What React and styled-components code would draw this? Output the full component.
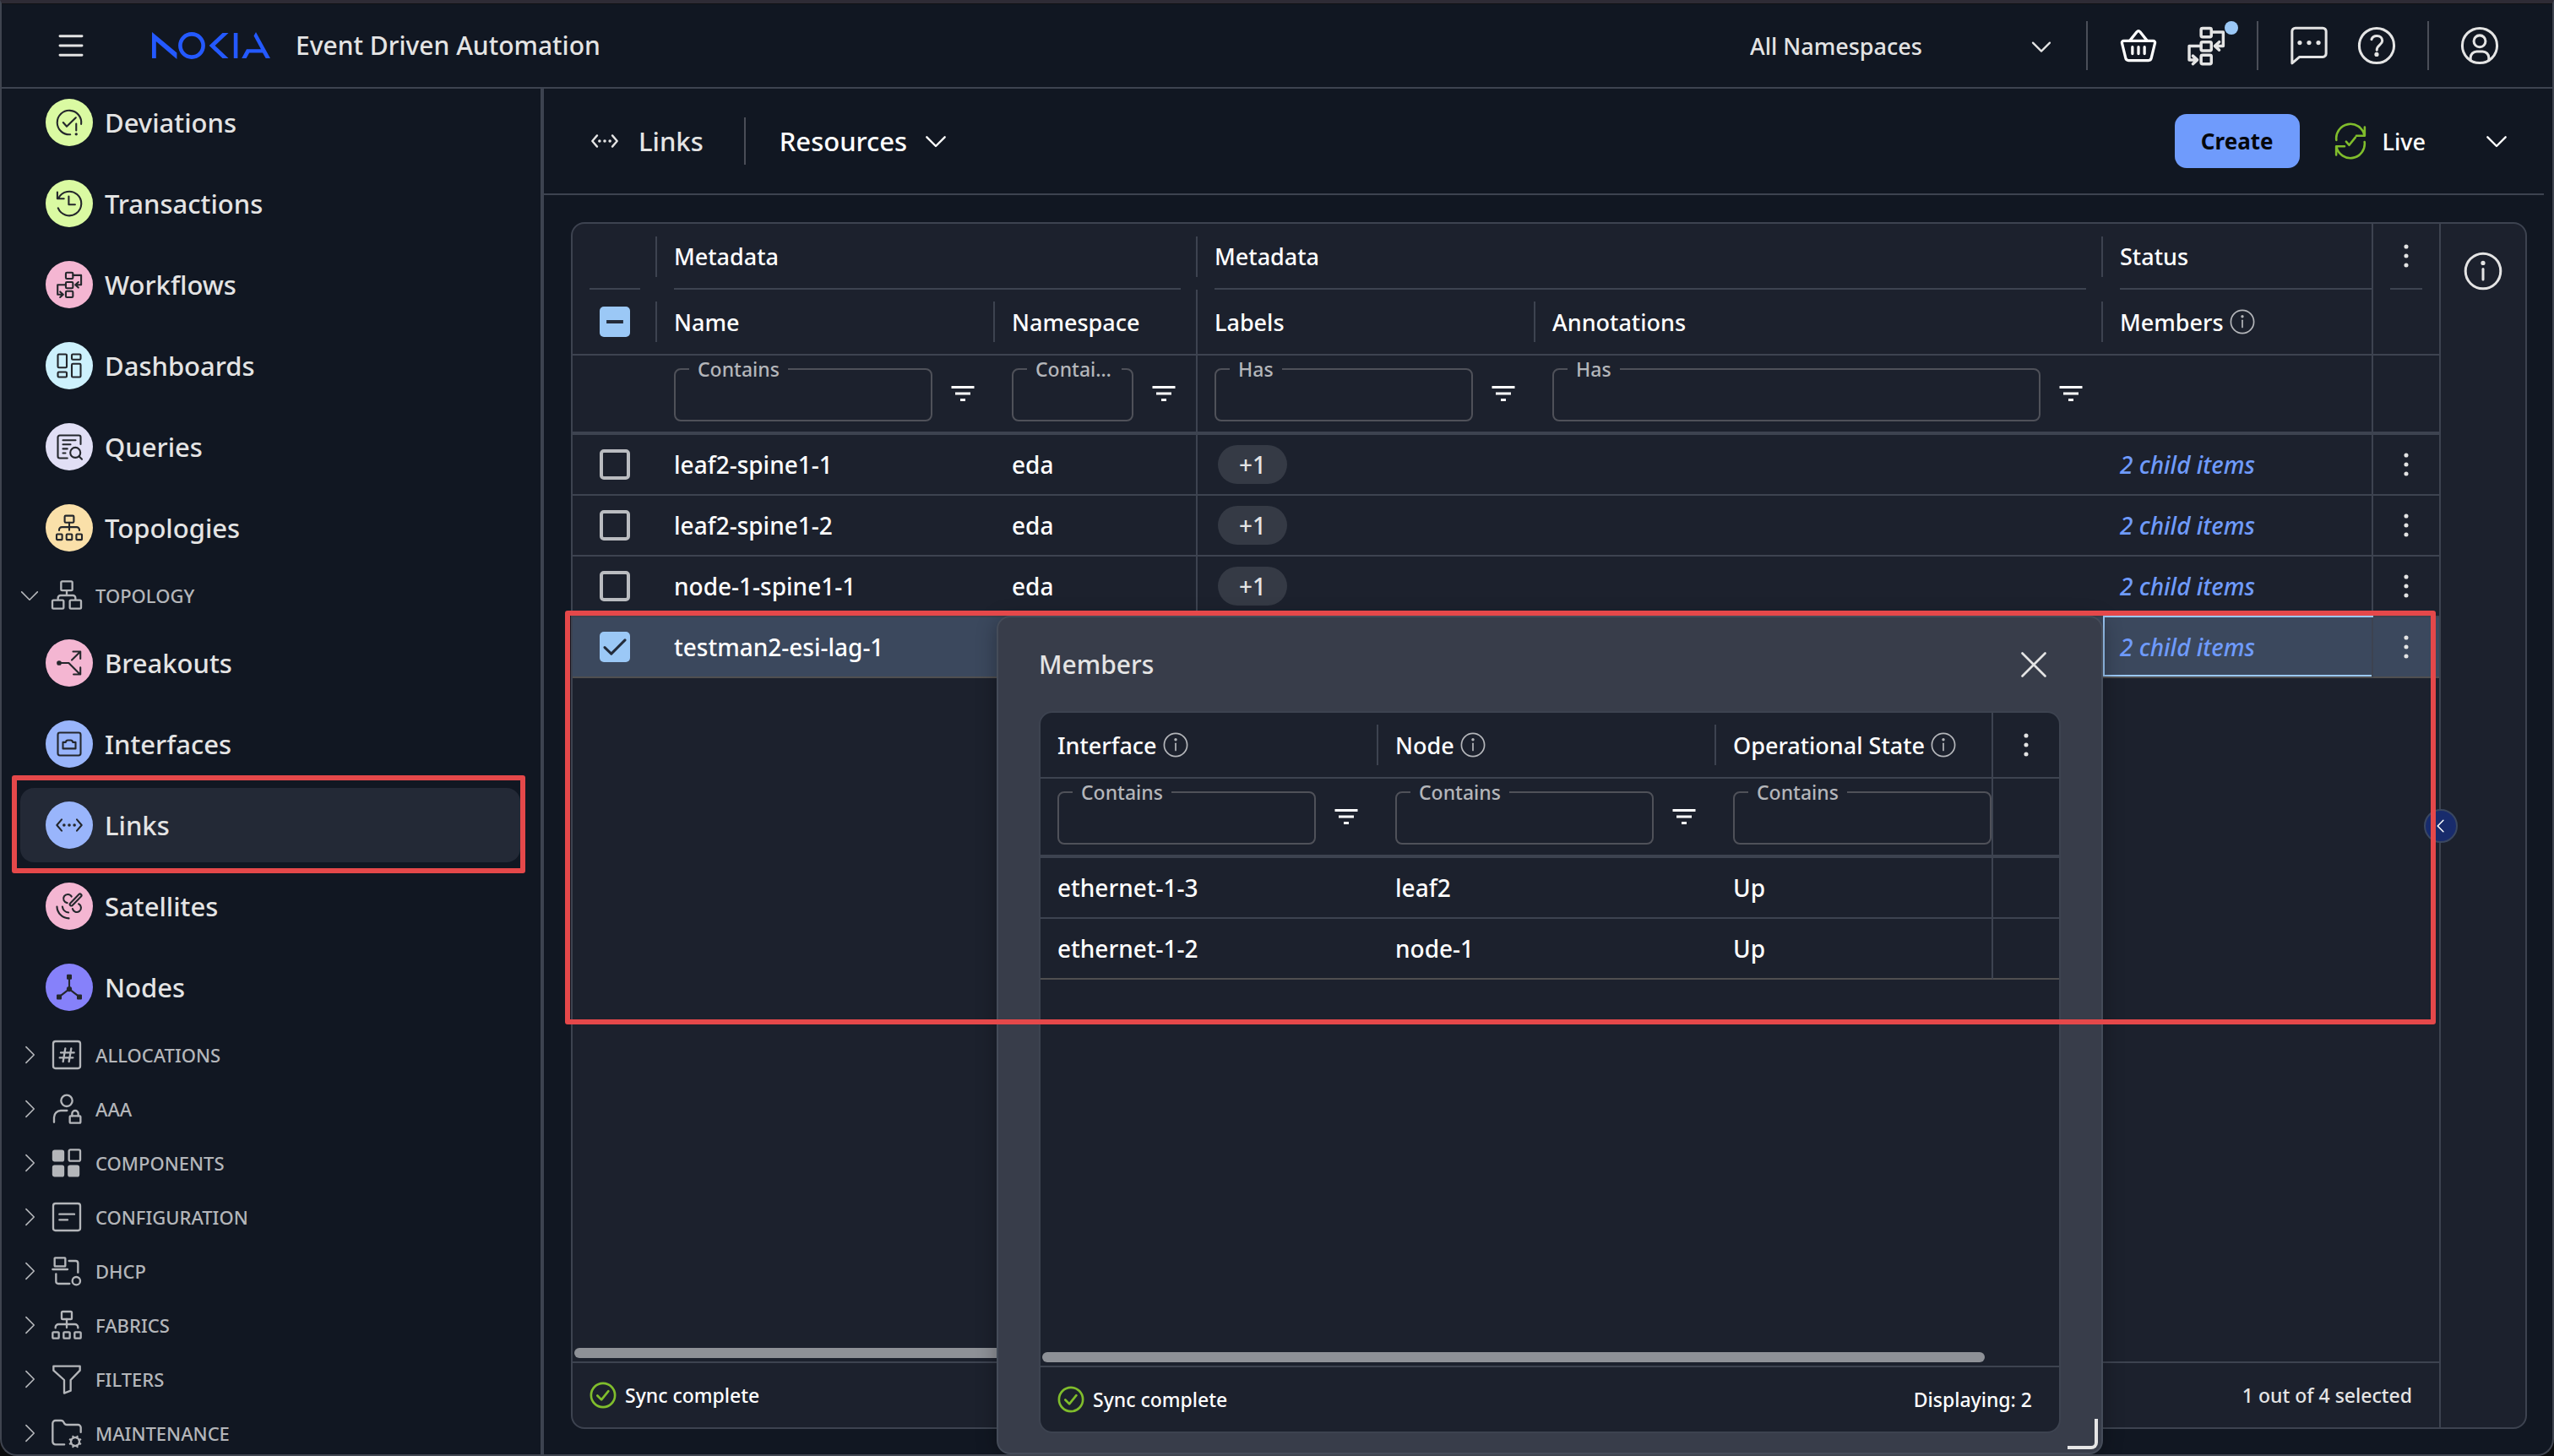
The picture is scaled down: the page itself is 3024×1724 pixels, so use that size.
import { useEffect, useId, useRef, useState } from "react";
import styled, { createGlobalStyle, ThemeProvider } from "styled-components";
import { FolderCog } from "lucide-react";
import { MdFilterList } from "react-icons/md";

const theme = {
  bg: "#111722",
  panel: "#1c212d",
  line: "#3d4350",
  dialog: "#383d4a",
  text: "#e4e4e4",
  muted: "#b4b6ba",
  blue: "#6f9bfc",
  sky: "#9bc8f6",
  green: "#80bd2c",
  red: "#e5484a",
};

const GlobalStyle = createGlobalStyle`
  * {
    box-sizing: border-box;
  }

  body {
    margin: 0;
    background: #0b0c0e;
    color: ${theme.text};
    font-family: "Noto Sans", "Open Sans", sans-serif;
    font-size: 28px;
  }

  button, input, select {
    font: inherit;
    color: inherit;
  }

  button {
    padding: 0;
    border: 0;
    background: none;
    cursor: pointer;
  }

  svg {
    display: block;
    flex: none;
  }
`;

/* ---------- layout ---------- */

const Window = styled.div`
  display: flex;
  flex-direction: column;
  height: 100vh;
  overflow: hidden;
  background: ${({ theme }) => theme.bg};
  border: 2px solid #3f444f;
  border-top: 4px solid #2e2b35;
  border-radius: 0 0 20px 20px;
`;

const Header = styled.header`
  display: flex;
  align-items: center;
  flex: none;
  height: 101px;
  padding: 0 26px 0 66px;
  border-top: 1px solid #101114;
  border-bottom: 2px solid ${({ theme }) => theme.line};
`;

const Body = styled.div`
  display: flex;
  flex: 1;
  min-height: 0;
`;

const Sidebar = styled.nav`
  flex: none;
  width: 642px;
  overflow: hidden;
  border-right: 4px solid ${({ theme }) => theme.line};
`;

const Main = styled.main`
  display: flex;
  flex-direction: column;
  flex: 1;
  min-width: 0;
`;

const Content = styled.section`
  position: relative;
  display: flex;
  flex: 1;
  min-height: 0;
  padding: 32px 30px 30px 32px;
`;

/* ---------- icons ---------- */

const Svg = styled.svg.attrs((p) => ({
  viewBox: p.viewBox || "0 0 24 24",
  "aria-hidden": true,
}))`
  width: ${({ $size }) => $size || 36}px;
  height: ${({ $size }) => $size || 36}px;
  fill: none;
  stroke: currentColor;
  stroke-width: ${({ $stroke }) => $stroke || 1.4};
  stroke-linecap: round;
  stroke-linejoin: round;

  .solid {
    fill: currentColor;
  }

  .dot {
    fill: currentColor;
    stroke: none;
  }
`;

const glyphs = {
  deviations: (
    <>
      <path d="M12.8 21.5A9.5 9.5 0 1 1 21.4 13.3" />
      <path d="M7.2 12l2.8 3.2 7.2-7M17.5 13v5.3" />
      <circle className="dot" cx="17.5" cy="21.2" r="1.1" />
    </>
  ),
  transactions: (
    <path d="M3.2 15.6A9.5 9.5 0 1 0 3.6 7.6M2.6 3v5.2h5.2M11.6 6.4v6.4h5" />
  ),
  workflows: (
    <>
      <rect x="9.3" y="2.5" width="5.6" height="4.8" rx=".8" />
      <rect x="9.3" y="10" width="5.6" height="4.8" rx=".8" />
      <rect x="9.3" y="17.2" width="5.6" height="4.8" rx=".8" />
      <path d="M15 4.6h6.4v7.6h-4.2M19.2 10l-2.4 2.2 2.4 2.2M9.2 12.2H2.8v7.6H7M4.8 17.6l2.4 2.2L4.8 22" />
    </>
  ),
  dashboards: (
    <>
      <rect x="3" y="3" width="7" height="10.5" rx=".8" />
      <rect x="14" y="3" width="7" height="4.2" rx=".8" />
      <rect x="3" y="17" width="7" height="4" rx=".8" />
      <rect x="14" y="10.5" width="7" height="10.5" rx=".8" />
    </>
  ),
  queries: (
    <>
      <path d="M10.5 21H4.5A1.5 1.5 0 0 1 3 19.5v-15A1.5 1.5 0 0 1 4.5 3h15A1.5 1.5 0 0 1 21 4.5V10" />
      <path d="M7 6.8h10M7 10.2h6M7 13.6h3.5M7 17h2" />
      <circle cx="16.8" cy="16.6" r="4" />
      <path d="M19.7 19.5l2.3 2.3" />
    </>
  ),
  fabric: (
    <>
      <rect x="8.4" y="2.4" width="7.2" height="5.4" rx=".8" />
      <path d="M12 7.8v6M4 14v-.4a2.2 2.2 0 0 1 2.2-2.2h11.6A2.2 2.2 0 0 1 20 13.6v.4" />
      <rect x="2" y="17" width="4.4" height="4.4" rx=".6" />
      <rect x="9.8" y="17" width="4.4" height="4.4" rx=".6" />
      <rect x="17.6" y="17" width="4.4" height="4.4" rx=".6" />
    </>
  ),
  topology: (
    <>
      <rect x="8" y="2" width="8" height="6.5" rx=".8" />
      <path d="M12 8.5v3.5M5.8 15v-1.2A1.8 1.8 0 0 1 7.6 12h8.8a1.8 1.8 0 0 1 1.8 1.8V15" />
      <rect x="1.8" y="15.4" width="8" height="6" rx=".8" />
      <rect x="14.2" y="15.4" width="8" height="6" rx=".8" />
    </>
  ),
  breakouts: (
    <>
      <circle className="solid" cx="4" cy="12" r="1.2" />
      <path d="M4 12h7.6l9 9M20.8 15.6V21h-5.4M14 9.6l6.6-6.4M15 3h5.8v5.6" />
    </>
  ),
  interfaces: (
    <>
      <rect x="3" y="3" width="18" height="18" rx="1.6" />
      <path d="M7 15.6v-5h2.2c.2-1 .8-1.6 1.6-1.6h2.4c.8 0 1.4.6 1.6 1.6H17v5z" />
    </>
  ),
  links: (
    <>
      <path d="M6 7.6L2.2 12 6 16.4M18 7.6l3.8 4.4-3.8 4.4" />
      <circle className="dot" cx="7.9" cy="12" r="1.2" />
      <circle className="dot" cx="12" cy="12" r="1.2" />
      <circle className="dot" cx="16.1" cy="12" r="1.2" />
    </>
  ),
  satellites: (
    <>
      <path d="M12.8 9.6l6.8-6.9a1.2 1.2 0 0 1 1.7 1.7l-6.8 6.9a1.2 1.2 0 0 1-1.7-1.7z" />
      <path d="M10.4 9.4A3.4 3.4 0 1 1 13.8 4.4M19.4 10.2a3.4 3.4 0 1 1-4.8 3.8" />
      <path d="M6.6 12.4a5.4 5.4 0 0 0 4.8 4.6M2.3 12.4a9.6 9.6 0 0 0 9.4 9.2" />
    </>
  ),
  nodes: (
    <>
      <rect className="solid" x="10.7" y="2.6" width="2.6" height="2.6" />
      <rect className="solid" x="2.7" y="18.4" width="2.6" height="2.6" />
      <rect className="solid" x="18.7" y="18.4" width="2.6" height="2.6" />
      <circle className="solid" cx="12" cy="13.4" r="1.4" />
      <path d="M12 4v9.4L4 19.6M12 13.4l8 6.2" />
    </>
  ),
  allocations: (
    <>
      <rect x="2.4" y="2.4" width="19.2" height="19.2" rx="1.6" />
      <path d="M11 7.4l-1.6 9.4M15.2 7.4l-1.6 9.4M7.8 10.4h9.4M7 14h9.4" />
    </>
  ),
  aaa: (
    <>
      <circle cx="12" cy="6.2" r="4" />
      <path d="M3 21.4V18a4.8 4.8 0 0 1 4.8-4.8h4.4" />
      <rect x="14.2" y="17" width="7.6" height="5" rx=".6" />
      <path d="M15.8 17v-1.6a2.2 2.2 0 0 1 4.4 0V17" />
    </>
  ),
  components: (
    <>
      <rect className="solid" x="2.4" y="3.4" width="7.2" height="7" rx="1" />
      <rect className="solid" x="2.4" y="14.2" width="7.2" height="7" rx="1" />
      <rect className="solid" x="13.4" y="14.2" width="7" height="7" rx="1" />
      <rect x="13.6" y="2.6" width="8" height="8" rx="1" />
    </>
  ),
  configuration: (
    <>
      <rect x="2.4" y="2.4" width="19.2" height="19.2" rx="1.6" />
      <path d="M6.8 10h10.6M6.8 14h5.8" />
    </>
  ),
  dhcp: (
    <>
      <rect x="3.4" y="2.6" width="7.6" height="6" rx=".4" />
      <path d="M2 10.8h10.6M13.6 4.8h4.8A1.6 1.6 0 0 1 20 6.4V13M4.4 14v5.4A1.6 1.6 0 0 0 6 21h8" />
      <circle cx="18.8" cy="19" r="2.8" />
    </>
  ),
  filters: (
    <path d="M2.6 2.8h18.8v3l-6.6 6.8v7.6l-4.6 1.8v-9.4L2.6 5.8z" />
  ),
  menu: <path d="M4.9 5.9h14.2M4.9 12h14.2M4.900 18.1h14.2" />,
  basket: (
    <>
      <path d="M7.2 9.400l3.9-4.900q.9-1 1.800 0l3.900 4.900" />
      <path d="M4 9.400h16a1 1 0 0 1 1 1.300l-2 8.200a1.600 1.600 0 0 1-1.600 1.200H6.600A1.600 1.600 0 0 1 5 18.900L3 10.700a1 1 0 0 1 1-1.300zM8.700 12.800v3.600M12 12.800v3.600M15.300 12.800v3.600" />
    </>
  ),
  chat: (
    <>
      <path d="M2.700 21.600V4.200a1.800 1.800 0 0 1 1.800-1.800h15a1.800 1.800 0 0 1 1.800 1.800v12.200a1.800 1.800 0 0 1-1.800 1.800H6.800z" />
      <circle className="dot" cx="6.900" cy="10.400" r="1.200" />
      <circle className="dot" cx="12" cy="10.400" r="1.200" />
      <circle className="dot" cx="17.100" cy="10.400" r="1.200" />
    </>
  ),
  help: (
    <>
      <circle cx="12" cy="12" r="9.500" />
      <path d="M9.200 8.600c.5-1.300 1.500-1.900 2.900-1.900 1.800 0 3 1.100 3 2.700 0 2.300-3 2.200-3 5" />
      <circle className="dot" cx="12" cy="16.800" r="1.200" />
    </>
  ),
  user: (
    <>
      <circle cx="12" cy="12" r="9.500" />
      <circle cx="12" cy="9.600" r="3.200" />
      <path d="M7 19.800v-1.200a3.400 3.400 0 0 1 3.400-3.400h3.200a3.400 3.400 0 0 1 3.400 3.400v1.200" />
    </>
  ),
  info: (
    <>
      <circle cx="12" cy="12" r="9.600" />
      <path d="M12 10.800v5.800" />
      <circle className="dot" cx="12" cy="7.600" r="1.200" />
    </>
  ),
  live: (
    <>
      <path d="M2.900 11.400A9.200 9.200 0 0 1 21 8.200M21.200 3v5.600h-5.400M21.100 12.600A9.200 9.200 0 0 1 3 15.800M2.800 21v-5.600h5.400" />
      <path d="M9.200 12.400l2 2.200 4-5" />
    </>
  ),
  synced: (
    <>
      <circle cx="12" cy="12" r="10.600" />
      <path d="M7 12.400l3.600 3.600 6.200-7.600" />
    </>
  ),
  dots: (
    <>
      <circle className="dot" cx="12" cy="5" r="1.600" />
      <circle className="dot" cx="12" cy="12" r="1.600" />
      <circle className="dot" cx="12" cy="19" r="1.600" />
    </>
  ),
  close: <path d="M3 3l18 18M21 3L3 21" />,
  down: <path d="M4 8.500l8 8 8-8" />,
  right: <path d="M8.500 4l8 8-8 8" />,
  left: <path d="M15.500 4l-8 8 8 8" />,
};

const Icon = ({ name, size, stroke }) => (
  <Svg $size={size} $stroke={stroke}>
    {glyphs[name]}
  </Svg>
);

const LogoSvg = styled.svg`
  width: 140px;
  height: 32px;
  margin-left: 80px;
  fill: #2459ff;
`;

const Logo = () => (
  <LogoSvg viewBox="0 0 140 32" role="img" aria-label="Nokia">
    <polygon points="0,0 29.4,24.6 29.4,32 4.8,11 4.8,31 0,31" />
    <circle cx="47" cy="16" r="13.6" fill="none" stroke="#2459ff" strokeWidth="4.6" />
    <polygon points="67.7,16 83.5,1 90.5,1 74.6,16 90.5,31 83.5,31" />
    <rect x="96.8" y="1" width="4.6" height="30" />
    <polygon points="120.5,4.6 123,0 140,31 134.7,31 131,24.4 115.2,24.4 111.6,31 106.2,31 112,20.3 129,20.3" />
  </LogoSvg>
);

/* ---------- header ---------- */

const IconButton = styled.button`
  position: relative;
  display: grid;
  place-items: center;
  place-content: center;
  width: ${({ $width }) => $width || 44}px;
  height: ${({ $height }) => $height || 52}px;
  color: ${({ $color, theme }) => $color || theme.text};
`;

const AppName = styled.h1`
  flex: 1;
  margin: 0 0 0 30px;
  font-size: 30px;
  font-weight: 500;
  line-height: 40px;
`;

const NamespaceBox = styled.div`
  position: relative;
  width: 362px;
  margin-right: 36px;

  svg {
    position: absolute;
    top: 8px;
    right: 2px;
    pointer-events: none;
  }
`;

const NamespaceSelect = styled.select`
  width: 100%;
  height: 44px;
  padding: 0;
  border: 0;
  background: none;
  appearance: none;
  font-size: 27px;
  font-weight: 500;
`;

const HeaderGroup = styled.div`
  display: flex;
  align-items: center;
  gap: 36px;
  height: 58px;
  padding: 0 38px;
  border-left: 2px solid #4a4e58;
`;

const Badge = styled.span`
  position: absolute;
  top: -3px;
  right: -16px;
  width: 16px;
  height: 16px;
  border-radius: 50%;
  background: ${({ theme }) => theme.sky};
`;

/* ---------- sidebar ---------- */

const NavList = styled.ul`
  /* scrolled just past the top of the first entry */
  margin: -8px 0 0;
  padding: 0;
  list-style: none;
`;

const NavItem = styled.a`
  display: flex;
  align-items: center;
  gap: 14px;
  height: 88px;
  margin: 0 24px 0 22px;
  padding-left: 30px;
  border-radius: 16px;
  background: ${({ $active }) => ($active ? "#232936" : "transparent")};
  color: ${({ theme }) => theme.text};
  font-size: 31px;
  font-weight: 500;
  text-decoration: none;
`;

const NavEntry = styled.li`
  position: relative;
  padding: 4px 0;
`;

const Bubble = styled.span`
  display: grid;
  place-items: center;
  width: 56px;
  height: 56px;
  border-radius: 50%;
  background: ${({ $color }) => $color};
  color: #24272c;
`;

const NavSection = styled.button`
  display: flex;
  align-items: center;
  width: 100%;
  height: 64px;
  padding-left: 19px;
  color: ${({ theme }) => theme.muted};
  font-size: 22px;
  font-weight: 500;

  span {
    margin-left: 14px;
  }

  svg + svg {
    margin-left: 10px;
  }
`;

/* red rectangles drawn on top of the page */
const Marker = styled.div`
  position: absolute;
  z-index: 5;
  border: 6px solid ${({ theme }) => theme.red};
  border-radius: 3px;
  pointer-events: none;
`;

const NavMarker = styled(Marker)`
  inset: -11px 18px -9px 12px;
`;

const ContentMarker = styled(Marker)`
  top: 492px;
  left: 25px;
  right: 138px;
  height: 490px;
`;

/* ---------- toolbar ---------- */

const Toolbar = styled.div`
  display: flex;
  align-items: center;
  flex: none;
  height: 126px;
  margin-right: 10px;
  padding: 0 40px 0 54px;
  border-bottom: 2px solid ${({ theme }) => theme.line};
  font-size: 31px;
  font-weight: 500;
`;

const Crumb = styled.span`
  display: flex;
  align-items: center;
  gap: 22px;
  height: 56px;
  padding-right: 48px;
  border-right: 2px solid #4a4d57;
`;

const MenuButton = styled.button`
  display: flex;
  align-items: center;
  gap: 18px;
  margin-left: 40px;
  color: #fff;
  font-weight: 500;
`;

const CreateButton = styled.button`
  height: 64px;
  margin-left: auto;
  padding: 0 31px;
  border-radius: 14px;
  background: ${({ theme }) => theme.blue};
  color: #05070c;
  font-size: 26px;
  font-weight: 700;
`;

const LiveButton = styled(MenuButton)`
  gap: 16px;
  margin-left: 38px;
  font-size: 27px;

  svg:first-child {
    color: ${({ theme }) => theme.green};
  }

  svg:last-child {
    margin-left: 52px;
  }
`;

/* ---------- grid ---------- */

const Panel = styled.div`
  display: flex;
  flex: 1;
  min-width: 0;
  min-height: 0;
  overflow: hidden;
  border: 2px solid ${({ theme }) => theme.line};
  border-radius: 16px;
  background: ${({ theme }) => theme.panel};
`;

const GridBox = styled.div`
  display: flex;
  flex-direction: column;
  flex: 1;
  min-width: 0;
`;

const TableBox = styled.div`
  flex: 1;
  min-height: 0;
  overflow: hidden;
`;

const Table = styled.table`
  width: 100%;
  table-layout: fixed;
  border-collapse: separate;
  border-spacing: 0;
  color: #fff;

  th, td {
    padding: 0 20px;
    text-align: left;
    font-weight: 500;
  }

  tbody tr:last-child td {
    border-bottom-color: #504f50;
  }
`;

const Col = styled.col`
  width: ${({ $width }) => ($width ? `${$width}px` : "auto")};
`;

const HeadCell = styled.th`
  height: 78px;
  border-right: ${({ $edge, theme }) => ($edge ? `2px solid ${theme.line}` : "0")};
  border-bottom: ${({ $group, theme }) => ($group ? "0" : `2px solid ${theme.line}`)};
  ${({ $divider, theme }) =>
    $divider &&
    `background: linear-gradient(${theme.line}, ${theme.line}) right center / 2px 48px no-repeat;`}
  font-size: 27px;

  && {
    padding-right: ${({ $flush }) => ($flush ? 0 : 20)}px;
  }
`;

const GroupLabel = styled.div`
  display: flex;
  align-items: center;
  justify-content: ${({ $center }) => ($center ? "center" : "flex-start")};
  height: 78px;
  border-bottom: 2px solid ${({ theme }) => theme.line};
`;

const HeadLabel = styled.div`
  display: flex;
  align-items: center;
  gap: 5px;
  white-space: nowrap;

  svg {
    color: ${({ theme }) => theme.muted};
  }
`;

const FilterCell = styled.th`
  height: 94px;
  border-right: ${({ $edge, theme }) => ($edge ? `2px solid ${theme.line}` : "0")};
  border-bottom: 4px solid ${({ theme }) => theme.line};

  && {
    padding-right: ${({ $flush }) => ($flush ? 0 : 20)}px;
  }
`;

const FilterBox = styled.div`
  display: flex;
  align-items: center;
  gap: 18px;
  height: 90px;
`;

const FilterField = styled.fieldset`
  align-self: flex-start;
  flex: 1;
  min-width: 0;
  height: 78px;
  margin: 0;
  padding: 0;
  border: 2px solid #4f5159;
  border-radius: 8px;
`;

const FilterLegend = styled.legend`
  max-width: calc(100% - 28px);
  margin-left: 16px;
  padding: 0 10px;
  overflow: hidden;
  color: ${({ theme }) => theme.muted};
  font-size: 23px;
  font-weight: 500;
  line-height: 32px;
  text-overflow: ellipsis;
  white-space: nowrap;
`;

const FilterInput = styled.input`
  display: block;
  width: 100%;
  height: 42px;
  padding: 0 16px;
  border: 0;
  background: none;
  outline: none;
`;

const Cell = styled.td`
  height: 72px;
  border-right: ${({ $edge, theme }) => ($edge ? `2px solid ${theme.line}` : "0")};
  border-bottom: 2px solid ${({ theme }) => theme.line};
  background: ${({ $selected }) => ($selected ? "#3b485d" : "transparent")};
  box-shadow: ${({ $focused, theme }) =>
    $focused
      ? `inset 2px 0 ${theme.sky}, inset 0 -2px ${theme.sky}, 0 -2px ${theme.sky}`
      : "none"};
`;

const CenterBox = styled.div`
  display: grid;
  place-items: center;
`;

const CheckLabel = styled.label`
  display: grid;
  place-items: center;

  > * {
    grid-area: 1 / 1;
  }

  svg {
    color: #232b3a;
    pointer-events: none;
  }
`;

const CheckInput = styled.input`
  width: 36px;
  height: 36px;
  margin: 0;
  border: 4px solid #babcc0;
  border-radius: 5px;
  appearance: none;

  &:checked, &:indeterminate {
    border: 0;
    background: ${({ theme }) => theme.sky};
  }
`;

const Chip = styled.span`
  display: grid;
  place-items: center;
  width: 82px;
  height: 46px;
  margin-left: 4px;
  border-radius: 23px;
  background: #353a45;
  color: ${({ theme }) => theme.text};
`;

const ChildLink = styled.a`
  color: ${({ theme }) => theme.blue};
  font-style: italic;
  text-decoration: none;
`;

const ScrollThumb = styled.div`
  flex: none;
  width: ${({ $width }) => $width};
  height: 12px;
  margin: 0 2px 4px;
  border-radius: 6px;
  background: #8e9197;
`;

const GridFooter = styled.footer`
  display: flex;
  align-items: center;
  justify-content: space-between;
  flex: none;
  height: 78px;
  padding: 0 32px 0 20px;
  border-top: 2px solid ${({ theme }) => theme.line};
  color: ${({ $bright }) => ($bright ? "#fff" : "#e4e4e4")};
  font-size: 23px;
  font-weight: 500;
`;

const SyncState = styled.span`
  display: flex;
  align-items: center;
  gap: 10px;
  color: #fff;

  svg {
    color: ${({ theme }) => theme.green};
  }
`;

const InfoRail = styled.aside`
  position: relative;
  display: flex;
  flex-direction: column;
  align-items: center;
  flex: none;
  width: 102px;
  padding-top: 30px;
  border-left: 2px solid ${({ theme }) => theme.line};
`;

const RailToggle = styled.button`
  position: absolute;
  top: 50%;
  left: -20px;
  display: grid;
  place-items: center;
  width: 40px;
  height: 40px;
  margin-top: -20px;
  border: 2px solid #3a4760;
  border-radius: 50%;
  background: #182b6c;
  color: #fff;
`;

/* ---------- dialog ---------- */

const Dialog = styled.div`
  position: absolute;
  top: 498px;
  right: 532px;
  bottom: 0;
  left: 536px;
  z-index: 2;
  display: flex;
  flex-direction: column;
  padding: 0 48px 23px;
  border: 2px solid #454c59;
  border-radius: 16px;
  background: ${({ theme }) => theme.dialog};
  box-shadow: 0 4px 24px rgba(0, 0, 0, 0.3);
`;

const DialogHead = styled.div`
  display: flex;
  align-items: center;
  justify-content: space-between;
  flex: none;
  height: 111px;
  padding-right: 14px;

  h2 {
    margin: 0;
    font-size: 30px;
    font-weight: 500;
  }
`;

const ResizeCorner = styled.span`
  position: absolute;
  right: 4px;
  bottom: 4px;
  width: 36px;
  height: 36px;
  border: solid #e6e6e6;
  border-width: 0 4px 4px 0;
  border-bottom-right-radius: 8px;
`;

/* ---------- data ---------- */

const apps = [
  { label: "Deviations", icon: "deviations", color: "#dafaa2" },
  { label: "Transactions", icon: "transactions", color: "#dafaa2" },
  { label: "Workflows", icon: "workflows", color: "#f4b6d2" },
  { label: "Dashboards", icon: "dashboards", color: "#cdf1fd" },
  { label: "Queries", icon: "queries", color: "#e1dff5" },
  { label: "Topologies", icon: "fabric", color: "#fae0a9" },
];

const topologyApps = [
  { label: "Breakouts", icon: "breakouts", color: "#f4b6d2" },
  { label: "Interfaces", icon: "interfaces", color: "#99b5fb" },
  { label: "Links", icon: "links", color: "#99b5fb", active: true },
  { label: "Satellites", icon: "satellites", color: "#f4b6d2" },
  { label: "Nodes", icon: "nodes", color: "#8681fa" },
];

const sections = [
  { label: "ALLOCATIONS", icon: "allocations" },
  { label: "AAA", icon: "aaa" },
  { label: "COMPONENTS", icon: "components" },
  { label: "CONFIGURATION", icon: "configuration" },
  { label: "DHCP", icon: "dhcp" },
  { label: "FABRICS", icon: "fabric" },
  { label: "FILTERS", icon: "filters" },
  { label: "MAINTENANCE" },
];

const initialRows = [
  { name: "leaf2-spine1-1", namespace: "eda", labels: "+1", checked: false },
  { name: "leaf2-spine1-2", namespace: "eda", labels: "+1", checked: false },
  { name: "node-1-spine1-1", namespace: "eda", labels: "+1", checked: false },
  { name: "testman2-esi-lag-1", checked: true },
];

const members = [
  { iface: "ethernet-1-3", node: "leaf2", state: "Up" },
  { iface: "ethernet-1-2", node: "node-1", state: "Up" },
];

/* ---------- parts ---------- */

const NavLink = ({ item }) => (
  <NavEntry>
    <NavItem href={`#${item.icon}`} $active={item.active}>
      <Bubble $color={item.color}>
        <Icon name={item.icon} />
      </Bubble>
      {item.label}
    </NavItem>
    {item.active && <NavMarker />}
  </NavEntry>
);

const Section = ({ label, icon, open }) => (
  <li>
    <NavSection type="button" aria-expanded={!!open}>
      <Icon name={open ? "down" : "right"} size={28} />
      {icon ? (
        <Icon name={icon} size={40} />
      ) : (
        <FolderCog size={40} strokeWidth={1.4} />
      )}
      <span>{label}</span>
    </NavSection>
  </li>
);

const Checkbox = ({ label, checked, mixed, onChange }) => {
  const ref = useRef(null);

  useEffect(() => {
    ref.current.indeterminate = !!mixed;
  }, [mixed]);

  return (
    <CheckLabel>
      <CheckInput
        ref={ref}
        type="checkbox"
        aria-label={label}
        checked={checked}
        onChange={onChange}
      />
      {(checked || mixed) && (
        <Svg $size={36} $stroke={mixed ? 2.8 : 2}>
          {mixed ? (
            <path d="M5.4 12h13.2" strokeLinecap="butt" />
          ) : (
            <path d="M4 12.4l5.2 5 10.8-10.8" />
          )}
        </Svg>
      )}
    </CheckLabel>
  );
};

const Filter = ({ text, column, bare }) => {
  const id = useId();

  return (
    <FilterBox>
      <FilterField>
        <FilterLegend>
          <label htmlFor={id}>{text}</label>
        </FilterLegend>
        <FilterInput id={id} type="text" />
      </FilterField>
      {!bare && (
        <IconButton type="button" $width={36} $height={36} $color="#fff" aria-label={`Filter ${column}`}>
          <MdFilterList size={36} />
        </IconButton>
      )}
    </FilterBox>
  );
};

const MoreButton = ({ label }) => (
  <IconButton type="button" $width={38} $height={38} aria-label={label}>
    <Icon name="dots" size={38} />
  </IconButton>
);

const TopBar = () => (
  <Header>
    <IconButton type="button" $width={32} aria-label="Menu">
      <Icon name="menu" size={44} stroke={1.6} />
    </IconButton>
    <Logo />
    <AppName>Event Driven Automation</AppName>
    <NamespaceBox>
      <NamespaceSelect aria-label="Namespace">
        <option>All Namespaces</option>
      </NamespaceSelect>
      <Icon name="down" size={30} stroke={1.8} />
    </NamespaceBox>
    <HeaderGroup>
      <IconButton type="button" $color="#fff" aria-label="Basket">
        <Icon name="basket" size={52} stroke={1.5} />
      </IconButton>
      <IconButton type="button" aria-label="Workflows">
        <Icon name="workflows" size={52} stroke={1.6} />
        <Badge />
      </IconButton>
    </HeaderGroup>
    <HeaderGroup>
      <IconButton type="button" aria-label="Messages">
        <Icon name="chat" size={52} />
      </IconButton>
      <IconButton type="button" aria-label="Help">
        <Icon name="help" size={52} />
      </IconButton>
    </HeaderGroup>
    <HeaderGroup>
      <IconButton type="button" aria-label="Account">
        <Icon name="user" size={52} />
      </IconButton>
    </HeaderGroup>
  </Header>
);

const LinksTable = ({ rows, toggle, toggleAll }) => (
  <Table>
    <colgroup>
      <Col $width={100} />
      <Col $width={400} />
      <Col $width={240} />
      <Col $width={400} />
      <Col />
      <Col $width={320} />
      <Col $width={78} />
    </colgroup>
    <thead>
      <tr>
        <HeadCell as="td" $group $divider>
          <GroupLabel />
        </HeadCell>
        <HeadCell $group $divider colSpan={2}>
          <GroupLabel>Metadata</GroupLabel>
        </HeadCell>
        <HeadCell $group $divider colSpan={2}>
          <GroupLabel>Metadata</GroupLabel>
        </HeadCell>
        <HeadCell $group $edge $flush>
          <GroupLabel>Status</GroupLabel>
        </HeadCell>
        <HeadCell as="td" $group>
          <GroupLabel $center>
            <MoreButton label="Table options" />
          </GroupLabel>
        </HeadCell>
      </tr>
      <tr>
        <HeadCell $divider>
          <Checkbox label="Select all" checked={false} mixed onChange={toggleAll} />
        </HeadCell>
        <HeadCell $divider>Name</HeadCell>
        <HeadCell $edge>Namespace</HeadCell>
        <HeadCell $divider>Labels</HeadCell>
        <HeadCell $divider>Annotations</HeadCell>
        <HeadCell $edge>
          <HeadLabel>
            Members
            <Icon name="info" size={34} stroke={1.2} />
          </HeadLabel>
        </HeadCell>
        <HeadCell as="td" />
      </tr>
      <tr>
        <FilterCell as="td" />
        <FilterCell>
          <Filter text="Contains" column="name" />
        </FilterCell>
        <FilterCell $edge>
          <Filter text="Contains" column="namespace" />
        </FilterCell>
        <FilterCell>
          <Filter text="Has" column="labels" />
        </FilterCell>
        <FilterCell>
          <Filter text="Has" column="annotations" />
        </FilterCell>
        <FilterCell as="td" $edge />
        <FilterCell as="td" />
      </tr>
    </thead>
    <tbody>
      {rows.map((row, i) => (
        <tr key={row.name}>
          <Cell $selected={row.checked}>
            <Checkbox
              label={`Select ${row.name}`}
              checked={row.checked}
              onChange={() => toggle(i)}
            />
          </Cell>
          <Cell $selected={row.checked}>{row.name}</Cell>
          <Cell $selected={row.checked} $edge>
            {row.namespace}
          </Cell>
          <Cell $selected={row.checked}>{row.labels && <Chip>{row.labels}</Chip>}</Cell>
          <Cell $selected={row.checked} />
          <Cell $selected={row.checked} $focused={row.checked} $edge>
            <ChildLink href="#members">2 child items</ChildLink>
          </Cell>
          <Cell $selected={row.checked}>
            <CenterBox>
              <MoreButton label={`Actions for ${row.name}`} />
            </CenterBox>
          </Cell>
        </tr>
      ))}
    </tbody>
  </Table>
);

const MembersDialog = ({ onClose }) => (
  <Dialog role="dialog" aria-label="Members">
    <DialogHead>
      <h2>Members</h2>
      <IconButton type="button" $width={36} $height={36} aria-label="Close" onClick={onClose}>
        <Icon name="close" size={36} stroke={1.8} />
      </IconButton>
    </DialogHead>
    <Panel>
      <GridBox>
        <TableBox>
          <Table>
            <colgroup>
              <Col $width={400} />
              <Col $width={400} />
              <Col />
              <Col $width={78} />
            </colgroup>
            <thead>
              <tr>
                <HeadCell $divider>
                  <HeadLabel>
                    Interface
                    <Icon name="info" size={34} stroke={1.2} />
                  </HeadLabel>
                </HeadCell>
                <HeadCell $divider>
                  <HeadLabel>
                    Node
                    <Icon name="info" size={34} stroke={1.2} />
                  </HeadLabel>
                </HeadCell>
                <HeadCell $edge>
                  <HeadLabel>
                    Operational State
                    <Icon name="info" size={34} stroke={1.2} />
                  </HeadLabel>
                </HeadCell>
                <HeadCell as="td">
                  <CenterBox>
                    <MoreButton label="Table options" />
                  </CenterBox>
                </HeadCell>
              </tr>
              <tr>
                <FilterCell>
                  <Filter text="Contains" column="interface" />
                </FilterCell>
                <FilterCell>
                  <Filter text="Contains" column="node" />
                </FilterCell>
                <FilterCell $edge $flush>
                  <Filter text="Contains" column="state" bare />
                </FilterCell>
                <FilterCell as="td" />
              </tr>
            </thead>
            <tbody>
              {members.map((m) => (
                <tr key={m.iface}>
                  <Cell>{m.iface}</Cell>
                  <Cell>{m.node}</Cell>
                  <Cell $edge>{m.state}</Cell>
                  <Cell />
                </tr>
              ))}
            </tbody>
          </Table>
        </TableBox>
        <ScrollThumb $width="92.5%" />
        <GridFooter $bright>
          <SyncState>
            <Icon name="synced" size={32} stroke={2} />
            Sync complete
          </SyncState>
          <span>Displaying: {members.length}</span>
        </GridFooter>
      </GridBox>
    </Panel>
    <ResizeCorner />
  </Dialog>
);

const App = () => {
  const [rows, setRows] = useState(initialRows);
  const [showMembers, setShowMembers] = useState(true);

  const selected = rows.filter((r) => r.checked).length;

  const toggle = (index) =>
    setRows(rows.map((r, i) => (i === index ? { ...r, checked: !r.checked } : r)));

  const toggleAll = () =>
    setRows(rows.map((r) => ({ ...r, checked: selected < rows.length })));

  return (
    <ThemeProvider theme={theme}>
      <GlobalStyle />
      <Window>
        <TopBar />
        <Body>
          <Sidebar>
            <NavList>
              {apps.map((item) => (
                <NavLink key={item.label} item={item} />
              ))}
              <Section label="TOPOLOGY" icon="topology" open />
              {topologyApps.map((item) => (
                <NavLink key={item.label} item={item} />
              ))}
              {sections.map((s) => (
                <Section key={s.label} {...s} />
              ))}
            </NavList>
          </Sidebar>
          <Main>
            <Toolbar>
              <Crumb>
                <Icon name="links" stroke={1.6} />
                Links
              </Crumb>
              <MenuButton type="button">
                Resources
                <Icon name="down" size={32} stroke={1.8} />
              </MenuButton>
              <CreateButton type="button">Create</CreateButton>
              <LiveButton type="button">
                <Icon name="live" size={44} />
                Live
                <Icon name="down" size={32} stroke={1.8} />
              </LiveButton>
            </Toolbar>
            <Content>
              <Panel>
                <GridBox>
                  <TableBox>
                    <LinksTable rows={rows} toggle={toggle} toggleAll={toggleAll} />
                  </TableBox>
                  <ScrollThumb $width="70%" />
                  <GridFooter>
                    <SyncState>
                      <Icon name="synced" size={32} stroke={2} />
                      Sync complete
                    </SyncState>
                    <span>
                      {selected} out of {rows.length} selected
                    </span>
                  </GridFooter>
                </GridBox>
                <InfoRail>
                  <IconButton type="button" aria-label="Details">
                    <Icon name="info" size={52} />
                  </IconButton>
                  <RailToggle type="button" aria-label="Expand details">
                    <Icon name="left" size={20} stroke={1.8} />
                  </RailToggle>
                </InfoRail>
              </Panel>
              {showMembers && <MembersDialog onClose={() => setShowMembers(false)} />}
              <ContentMarker />
            </Content>
          </Main>
        </Body>
      </Window>
    </ThemeProvider>
  );
};

export default App;
